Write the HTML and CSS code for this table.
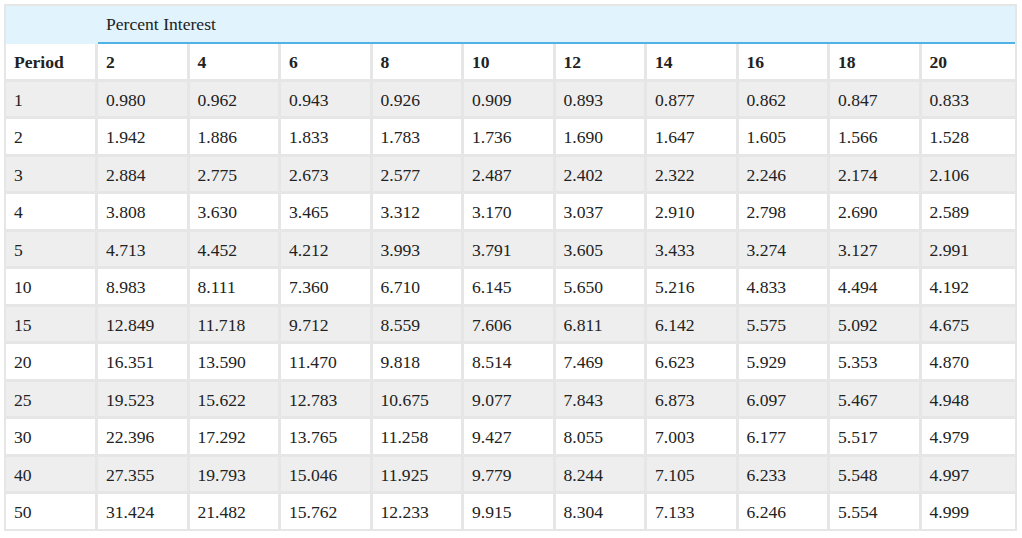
FILE: index.html
```html
<!DOCTYPE html>
<html>
<head>
<meta charset="utf-8">
<link rel="stylesheet" href="styles.css">
</head>
<body>
<table class="pv-table">
  <colgroup>
    <col class="c-first">
    <col class="c-mid"><col class="c-mid"><col class="c-mid"><col class="c-mid"><col class="c-mid">
    <col class="c-mid"><col class="c-mid"><col class="c-mid"><col class="c-mid">
    <col class="c-last">
  </colgroup>
  <thead>
    <tr class="group-row">
      <th class="corner"></th>
      <th class="group" colspan="10">Percent Interest</th>
    </tr>
  </thead>
  <tbody>
    <tr class="head-row"><th>Period</th><th>2</th><th>4</th><th>6</th><th>8</th><th>10</th><th>12</th><th>14</th><th>16</th><th>18</th><th>20</th></tr>
    <tr class="odd"><td>1</td><td>0.980</td><td>0.962</td><td>0.943</td><td>0.926</td><td>0.909</td><td>0.893</td><td>0.877</td><td>0.862</td><td>0.847</td><td>0.833</td></tr>
    <tr><td>2</td><td>1.942</td><td>1.886</td><td>1.833</td><td>1.783</td><td>1.736</td><td>1.690</td><td>1.647</td><td>1.605</td><td>1.566</td><td>1.528</td></tr>
    <tr class="odd"><td>3</td><td>2.884</td><td>2.775</td><td>2.673</td><td>2.577</td><td>2.487</td><td>2.402</td><td>2.322</td><td>2.246</td><td>2.174</td><td>2.106</td></tr>
    <tr><td>4</td><td>3.808</td><td>3.630</td><td>3.465</td><td>3.312</td><td>3.170</td><td>3.037</td><td>2.910</td><td>2.798</td><td>2.690</td><td>2.589</td></tr>
    <tr class="odd"><td>5</td><td>4.713</td><td>4.452</td><td>4.212</td><td>3.993</td><td>3.791</td><td>3.605</td><td>3.433</td><td>3.274</td><td>3.127</td><td>2.991</td></tr>
    <tr><td>10</td><td>8.983</td><td>8.111</td><td>7.360</td><td>6.710</td><td>6.145</td><td>5.650</td><td>5.216</td><td>4.833</td><td>4.494</td><td>4.192</td></tr>
    <tr class="odd"><td>15</td><td>12.849</td><td>11.718</td><td>9.712</td><td>8.559</td><td>7.606</td><td>6.811</td><td>6.142</td><td>5.575</td><td>5.092</td><td>4.675</td></tr>
    <tr><td>20</td><td>16.351</td><td>13.590</td><td>11.470</td><td>9.818</td><td>8.514</td><td>7.469</td><td>6.623</td><td>5.929</td><td>5.353</td><td>4.870</td></tr>
    <tr class="odd"><td>25</td><td>19.523</td><td>15.622</td><td>12.783</td><td>10.675</td><td>9.077</td><td>7.843</td><td>6.873</td><td>6.097</td><td>5.467</td><td>4.948</td></tr>
    <tr><td>30</td><td>22.396</td><td>17.292</td><td>13.765</td><td>11.258</td><td>9.427</td><td>8.055</td><td>7.003</td><td>6.177</td><td>5.517</td><td>4.979</td></tr>
    <tr class="odd"><td>40</td><td>27.355</td><td>19.793</td><td>15.046</td><td>11.925</td><td>9.779</td><td>8.244</td><td>7.105</td><td>6.233</td><td>5.548</td><td>4.997</td></tr>
    <tr class="last"><td>50</td><td>31.424</td><td>21.482</td><td>15.762</td><td>12.233</td><td>9.915</td><td>8.304</td><td>7.133</td><td>6.246</td><td>5.554</td><td>4.999</td></tr>
  </tbody>
</table>
</body>
</html>
```

FILE: styles.css
```css
html, body {
  margin: 0;
  padding: 0;
  background: #ffffff;
}

body {
  padding: 4px;
  font-family: "Liberation Serif", "Times New Roman", serif;
  font-size: 17.6px;
  color: #222222;
}

.pv-table {
  width: 1013px;
  table-layout: fixed;
  border-collapse: separate;
  border-spacing: 0;
  border: 2px solid #e6e6e6;
}

.c-first {
  width: 92px;
}

.c-mid {
  width: 91.5px;
}

.pv-table th,
.pv-table td {
  box-sizing: border-box;
  text-align: left;
  vertical-align: middle;
  line-height: 26.5px;
  padding: 5px 8px 3px 8px;
  border-right: 3px solid #e6e6e6;
  border-bottom: 3px solid #e6e6e6;
  background: #ffffff;
  white-space: nowrap;
}

.pv-table th:last-child,
.pv-table td:last-child {
  border-right: none;
}

.pv-table tr.last td {
  border-bottom: none;
}

.pv-table tr.odd td {
  background: #eeeeee;
}

.pv-table .head-row th {
  font-weight: bold;
}

.group-row th {
  background: #e1f3fc;
  font-weight: normal;
  padding: 5px 8px 4.5px 8px;
}

.group-row th.corner {
  border-right: none;
  border-bottom: 2px solid #e1f3fc;
}

.group-row th.group {
  border-bottom: 2px solid #4fb1e6;
  border-right: none;
}
```
